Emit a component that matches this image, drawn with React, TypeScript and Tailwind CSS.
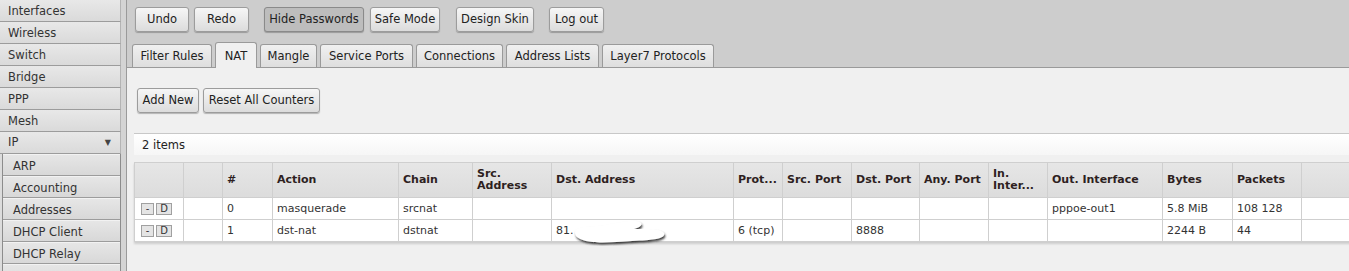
import React from 'react';

const menu = ['Interfaces', 'Wireless', 'Switch', 'Bridge', 'PPP', 'Mesh'];
const ipMenu = ['ARP', 'Accounting', 'Addresses', 'DHCP Client', 'DHCP Relay', ''];

const tools = [
    { label: 'Undo', w: 'w-[54px]', ml: 'ml-0' },
    { label: 'Redo', w: 'w-[55px]', ml: 'ml-[5px]' },
    { label: 'Hide Passwords', w: 'w-[100px]', ml: 'ml-[15px]', pressed: true },
    { label: 'Safe Mode', w: 'w-[70px]', ml: 'ml-[6px]' },
    { label: 'Design Skin', w: 'w-[78px]', ml: 'ml-[16px]' },
    { label: 'Log out', w: 'w-[55px]', ml: 'ml-[15px]' },
];

const tabs = [
    { label: 'Filter Rules', w: 'w-[80px]' },
    { label: 'NAT', w: 'w-[42px]', active: true },
    { label: 'Mangle', w: 'w-[57px]' },
    { label: 'Service Ports', w: 'w-[93px]' },
    { label: 'Connections', w: 'w-[87px]' },
    { label: 'Address Lists', w: 'w-[93px]' },
    { label: 'Layer7 Protocols', w: 'w-[112px]' },
];

const cols = [49, 39, 50, 126, 74, 79, 182, 49, 69, 68, 69, 59, 115, 70, 69, 80];
const headers = ['', '', '#', 'Action', 'Chain', 'Src. Address', 'Dst. Address', 'Prot...', 'Src. Port', 'Dst. Port', 'Any. Port', 'In. Inter...', 'Out. Interface', 'Bytes', 'Packets', ''];

const rows = [
    ['', '0', 'masquerade', 'srcnat', '', '', '', '', '', '', '', 'pppoe-out1', '5.8 MiB', '108 128', ''],
    ['', '1', 'dst-nat', 'dstnat', '', '81.', '6 (tcp)', '', '8888', '', '', '', '2244 B', '44', ''],
];

function Btn({ label, className, pressed }: { label: string; className?: string; pressed?: boolean }) {
    return (
        <button
            className={`h-[25px] pt-[1px] rounded-[3px] border text-[11.5px] text-[#222] shadow-[0_1px_1px_rgba(0,0,0,0.25)] ${pressed ? 'border-[#8a8a8a] bg-[#bdbdbd]' : 'border-[#9c9c9c] bg-gradient-to-b from-[#f6f6f6] to-[#dcdcdc]'} ${className ?? ''}`}
        >
            {label}
        </button>
    );
}

function Blob() {
    return (
        <svg width="100" height="28" viewBox="0 0 100 28" className="absolute left-[16px] top-[-5px]">
            <defs>
                <filter id="sh" x="-10%" y="-30%" width="130%" height="170%">
                    <feDropShadow dx="1" dy="2" stdDeviation="1.3" floodColor="#222" floodOpacity="0.9" />
                </filter>
            </defs>
            <path
                d="M3,15 C3,9 11,9 25,8 C39,7 52,2 64,3 C72,4 71,9 62,11 C73,11 89,10 92,15 C94,21 80,22 60,23 C45,24 30,25 21,24 C11,23 3,20 3,15 Z"
                fill="#ffffff"
                filter="url(#sh)"
            />
        </svg>
    );
}

export default function App() {
    return (
        <div className="flex w-[1349px] h-[271px] overflow-hidden text-[11px] text-[#333]" style={{ fontFamily: '"DejaVu Sans", Verdana, sans-serif' }}>
            {/* Sidebar */}
            <div className="flex w-[127px] shrink-0 flex-col bg-[#d4d4d4] border-r border-[#9a9a9a] text-[11.5px]">
                <div className="w-[121px]">
                    {menu.map((m) => (
                        <div key={m} className="h-[22px] leading-[21px] pt-[1px] pl-[8px] bg-gradient-to-b from-[#e8e8e8] to-[#dadada] border-b border-[#9c9c9c] border-r border-r-[#b4b4b4]">
                            {m}
                        </div>
                    ))}
                    <div className="flex h-[22px] pt-[1px] items-center justify-between pl-[8px] pr-[9px] bg-gradient-to-b from-[#e8e8e8] to-[#dadada] border-b border-[#9c9c9c] border-r border-r-[#b4b4b4]">
                        <span>IP</span>
                        <span className="text-[8px] text-[#444]">▼</span>
                    </div>
                </div>
                <div className="flex flex-1">
                    <div className="w-[3px] bg-[#dcdcdc] border-r border-[#8c8c8c]" />
                    <div className="w-[118px] border-r border-[#8c8c8c]">
                        {ipMenu.map((m, i) => (
                            <div key={i} className="h-[22px] leading-[21px] pt-[1px] pl-[10px] bg-gradient-to-b from-[#e6e6e6] to-[#d8d8d8] border-b border-[#9c9c9c] border-t border-t-[#f2f2f2]">
                                {m}
                            </div>
                        ))}
                    </div>
                </div>
            </div>

            {/* Main */}
            <div className="flex min-w-0 flex-1 flex-col bg-[#f0f0f0]">
                <div className="bg-[#cdcdcd]">
                    <div className="flex h-[44px] items-start pt-[7px] pl-[8px]">
                        {tools.map((t) => (
                            <Btn key={t.label} label={t.label} pressed={t.pressed} className={`${t.w} ${t.ml}`} />
                        ))}
                    </div>
                    <div className="flex h-[24px] items-end gap-[3px] pl-[5px] border-b border-[#9a9a9a] text-[11.5px]">
                        {tabs.map((t) =>
                            t.active ? (
                                <div key={t.label} className={`${t.w} -mb-px h-[26px] leading-[27px] text-center rounded-t-[3px] border border-b-0 border-[#9a9a9a] bg-[#f0f0f0] text-[#222]`}>
                                    {t.label}
                                </div>
                            ) : (
                                <div key={t.label} className={`${t.w} h-[23px] leading-[23px] text-center rounded-t-[3px] border border-b-0 border-[#9a9a9a] bg-gradient-to-b from-[#f0f0f0] to-[#dedede] text-[#222]`}>
                                    {t.label}
                                </div>
                            )
                        )}
                    </div>
                </div>

                <div className="flex gap-[4px] pt-[20px] pl-[10px]">
                    <Btn label="Add New" className="w-[62px]" />
                    <Btn label="Reset All Counters" className="w-[117px]" />
                </div>

                <div className="mt-[20px] ml-[7px] h-[22px] leading-[22px] pl-[8px] border-t border-[#c8c8c8] bg-gradient-to-b from-[#ffffff] to-[#f6f6f6] text-[#222] text-[11.5px]">
                    2 items
                </div>

                <div className="mt-[7px] ml-[7px] w-[1260px]">
                    <table className="table-fixed border-collapse shadow-[0_2px_2px_rgba(0,0,0,0.15)]" style={{ width: cols.reduce((a, b) => a + b, 0) }}>
                        <colgroup>
                            {cols.map((c, i) => (
                                <col key={i} style={{ width: c }} />
                            ))}
                        </colgroup>
                        <thead>
                            <tr className="h-[35px] bg-gradient-to-b from-[#e6e6e6] to-[#dcdcdc]">
                                {headers.map((h, i) => (
                                    <th key={i} className="border border-[#cfcfcf] pl-[4px] pr-0 text-left align-middle font-bold leading-[12px] whitespace-nowrap overflow-hidden text-[#2e1f1f]">
                                        {h === 'Src. Address' ? (
                                            <>Src.<br />Address</>
                                        ) : h === 'In. Inter...' ? (
                                            <>In.<br />Inter...</>
                                        ) : (
                                            h
                                        )}
                                    </th>
                                ))}
                            </tr>
                        </thead>
                        <tbody>
                            {rows.map((r, ri) => (
                                <tr key={ri} className="h-[22px] bg-white">
                                    <td className="border border-[#cfcfcf] pl-[6px]">
                                        <div className="flex gap-[2px]">
                                            <span className="flex h-[12px] w-[13px] items-center justify-center border border-[#a0a0a0] bg-[#e4e4e4] text-[10px] leading-none">-</span>
                                            <span className="flex h-[12px] w-[16px] items-center justify-center border border-[#a0a0a0] bg-[#e4e4e4] text-[10px] leading-none">D</span>
                                        </div>
                                    </td>
                                    {r.map((c, ci) => (
                                        <td key={ci} className="border border-[#cfcfcf] pl-[4px] pt-[1px] whitespace-nowrap text-[#333]">
                                            {ci === 5 && c ? (
                                                <div className="relative">
                                                    {c}
                                                    <Blob />
                                                </div>
                                            ) : (
                                                c
                                            )}
                                        </td>
                                    ))}
                                </tr>
                            ))}
                        </tbody>
                    </table>
                </div>
            </div>
        </div>
    );
}
